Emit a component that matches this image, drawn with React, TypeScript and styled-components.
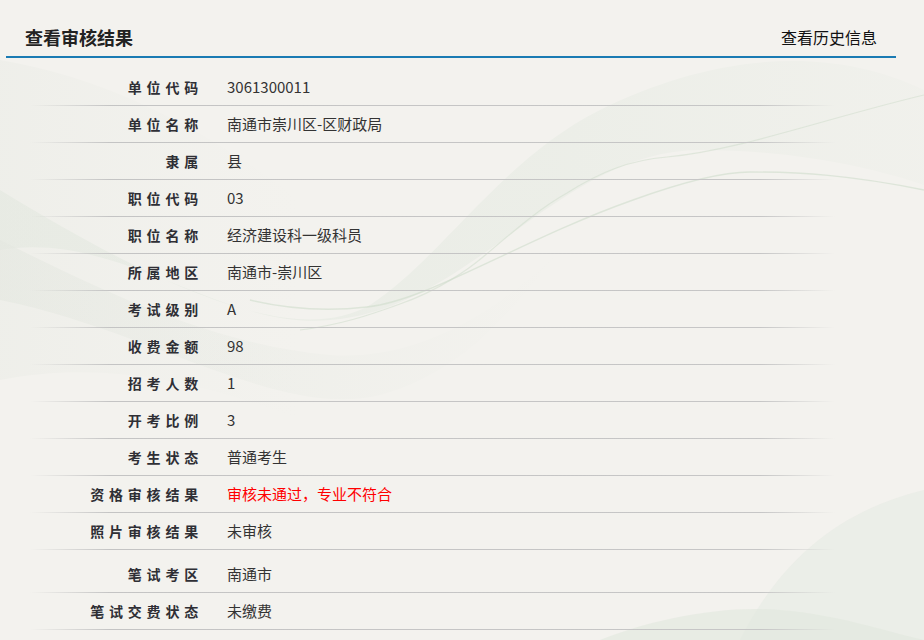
import styled, { createGlobalStyle } from 'styled-components';

const GlobalStyle = createGlobalStyle`
  html, body {
    margin: 0;
    padding: 0;
    background: #f3f2ee;
  }
  body {
    font-family: "Noto Sans CJK SC", "Noto Sans", sans-serif;
    color: #333;
  }
`;

type Field = {
  label: string;
  value: string;
  tone?: 'alert';
  spaced?: boolean;
};

const fields: Field[] = [
  { label: '单位代码', value: '3061300011' },
  { label: '单位名称', value: '南通市崇川区-区财政局' },
  { label: '隶属', value: '县' },
  { label: '职位代码', value: '03' },
  { label: '职位名称', value: '经济建设科一级科员' },
  { label: '所属地区', value: '南通市-崇川区' },
  { label: '考试级别', value: 'A' },
  { label: '收费金额', value: '98' },
  { label: '招考人数', value: '1' },
  { label: '开考比例', value: '3' },
  { label: '考生状态', value: '普通考生' },
  { label: '资格审核结果', value: '审核未通过，专业不符合', tone: 'alert' },
  { label: '照片审核结果', value: '未审核' },
  { label: '笔试考区', value: '南通市', spaced: true },
  { label: '笔试交费状态', value: '未缴费' },
];

const Page = styled.div`
  position: relative;
  width: 924px;
  height: 640px;
  overflow: hidden;
  background: #f3f2ee;
`;

const Backdrop = styled.svg`
  position: absolute;
  inset: 0;
  width: 100%;
  height: 100%;
  pointer-events: none;
`;

const Content = styled.div`
  position: relative;
  z-index: 1;
`;

const Header = styled.header`
  display: flex;
  align-items: center;
  justify-content: space-between;
  margin: 0 28px 0 6px;
  padding: 26px 19px 8px 19px;
  line-height: 22px;
  border-bottom: 2px solid #1a7bb3;
`;

const Title = styled.h1`
  margin: 0;
  font-size: 18px;
  font-weight: 700;
  color: #222;
`;

const HistoryLink = styled.a`
  font-size: 16px;
  color: #111;
  text-decoration: none;
  cursor: pointer;
`;

const List = styled.div`
  display: flex;
  flex-direction: column;
  margin-top: 11px;
`;

const Row = styled.div<{ $spaced?: boolean }>`
  display: grid;
  grid-template-columns: 203px 1fr;
  column-gap: 24px;
  align-items: center;
  box-sizing: border-box;
  height: ${({ $spaced }) => ($spaced ? '43px' : '37px')};
  padding-top: ${({ $spaced }) => ($spaced ? '6px' : '0')};
  padding-bottom: 1px;
  background: linear-gradient(
      to right,
      rgba(196, 196, 196, 0) 30px,
      #c4c4c4 110px,
      #c6c6c6 760px,
      rgba(196, 196, 196, 0) 835px
    )
    left bottom / 100% 1px no-repeat;
`;

const Label = styled.span`
  text-align: right;
  font-size: 14px;
  font-weight: 700;
  letter-spacing: 4.8px;
  color: #2f2f35;
  line-height: 20px;
`;

const Value = styled.span<{ $tone?: 'alert' }>`
  font-size: 15px;
  line-height: 20px;
  color: ${({ $tone }) => ($tone === 'alert' ? '#ff0000' : '#333')};
`;

const Waves = () => (
  <Backdrop viewBox="0 0 924 640" preserveAspectRatio="none">
    <defs>
      <linearGradient id="band" x1="0" y1="0" x2="1" y2="0">
        <stop offset="0" stopColor="#dfe6dc" stopOpacity="0.5" />
        <stop offset="0.6" stopColor="#e3e9e0" stopOpacity="0.45" />
        <stop offset="1" stopColor="#e6ebe3" stopOpacity="0.2" />
      </linearGradient>
      <linearGradient id="left" x1="0" y1="0" x2="1" y2="0">
        <stop offset="0" stopColor="#e4e7e0" stopOpacity="0.6" />
        <stop offset="1" stopColor="#e9ece6" stopOpacity="0" />
      </linearGradient>
    </defs>
    <path
      d="M0 250 C 120 230, 220 330, 330 320 C 470 310, 560 150, 700 150 C 800 150, 880 170, 924 185 L 924 90 C 820 40, 700 60, 600 110 C 500 160, 440 260, 370 305 C 300 345, 180 300, 0 190 Z"
      fill="url(#band)"
    />
    <path
      d="M0 300 C 150 330, 280 420, 380 395 C 470 370, 520 300, 560 250 C 480 330, 400 360, 330 355 C 220 345, 120 300, 0 240 Z"
      fill="url(#left)"
    />
    <path
      d="M300 330 C 340 325, 370 315, 400 304 C 440 290, 470 268, 483 257 C 515 230, 540 208, 567 193 C 600 172, 630 160, 667 157 C 740 150, 820 120, 924 95"
      fill="none"
      stroke="#cfdccc"
      strokeOpacity="0.55"
      strokeWidth="1.2"
    />
    <path
      d="M250 300 C 300 312, 340 310, 367 307 C 430 300, 520 240, 633 200 C 680 183, 720 172, 750 172 C 800 172, 850 175, 924 190"
      fill="none"
      stroke="#cfdccc"
      strokeOpacity="0.6"
      strokeWidth="1.4"
    />
    <path
      d="M740 640 C 780 560, 840 510, 924 490 L 924 640 Z"
      fill="#e4e9e1"
      fillOpacity="0.5"
    />
    <path
      d="M600 640 C 650 620, 720 605, 780 610 C 840 615, 880 630, 924 640 Z"
      fill="#e1e8de"
      fillOpacity="0.6"
    />
    <path
      d="M0 60 C 120 80, 220 140, 300 200 L 300 420 C 200 380, 100 360, 0 380 Z"
      fill="url(#left)"
      fillOpacity="0.5"
    />
  </Backdrop>
);

const App = (): JSX.Element => (
  <Page>
    <GlobalStyle />
    <Waves />
    <Content>
      <Header>
        <Title>查看审核结果</Title>
        <HistoryLink>查看历史信息</HistoryLink>
      </Header>
      <List>
        { fields.map((field) => (
          <Row key={field.label} $spaced={field.spaced}>
            <Label>{ field.label }</Label>
            <Value $tone={field.tone}>{ field.value }</Value>
          </Row>
        )) }
      </List>
    </Content>
  </Page>
);

export default App;
